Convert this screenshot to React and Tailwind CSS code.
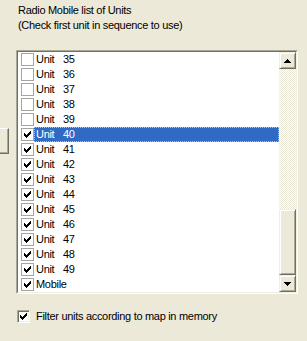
import React from 'react'

const units = [35, 36, 37, 38, 39, 40, 41, 42, 43, 44, 45, 46, 47, 48, 49]

// classic 7x7 check mark, drawn pixel by pixel
const checkPixels = [
  [6, 0], [5, 1], [6, 1], [0, 2], [4, 2], [5, 2], [6, 2],
  [0, 3], [1, 3], [3, 3], [4, 3], [5, 3],
  [0, 4], [1, 4], [2, 4], [3, 4], [4, 4], [1, 5], [2, 5], [3, 5], [2, 6],
]

const CheckMark = () => (
  <svg width="7" height="7" viewBox="0 0 7 7" shapeRendering="crispEdges">
    {checkPixels.map(([x, y]) => (
      <rect key={`${x}-${y}`} x={x} y={y} width="1" height="1" fill="#000" />
    ))}
  </svg>
)

const Arrow = ({ down }) => (
  <svg width="7" height="4" viewBox="0 0 7 4" shapeRendering="crispEdges">
    {down ? (
      <path d="M0 0h7v1H0zM1 1h5v1H1zM2 2h3v1H2zM3 3h1v1H3z" fill="#000" />
    ) : (
      <path d="M3 0h1v1H3zM2 1h3v1H2zM1 2h5v1H1zM0 3h7v1H0z" fill="#000" />
    )}
  </svg>
)

const ListCheck = ({ checked }) => (
  <div className="flex h-[13px] w-[13px] shrink-0 items-center justify-center border border-[#a5a59c] bg-white">
    {checked && <CheckMark />}
  </div>
)

const Row = ({ label, num, checked, selected }) => (
  <div className="flex h-[15px] items-center pl-[3px]">
    <ListCheck checked={checked} />
    <div
      className={`flex h-full flex-1 items-center pl-[2px] ${
        selected
          ? 'bg-[#316ac5] text-white outline-1 outline-dotted outline-[#f0c060] -outline-offset-1'
          : ''
      }`}
    >
      <span className="w-[27px]">{label}</span>
      {num && <span>{num}</span>}
    </div>
  </div>
)

const ScrollButton = ({ down }) => (
  <div className="flex h-[17px] w-[17px] shrink-0 items-center justify-center border border-t-[#f1efe2] border-l-[#f1efe2] border-r-[#716f64] border-b-[#716f64] bg-[#ece9d8] shadow-[inset_1px_1px_0_#fff,inset_-1px_-1px_0_#aca899]">
    <Arrow down={down} />
  </div>
)

export default function App() {
  return (
    <div className="relative h-[341px] w-[307px] overflow-hidden bg-[#ece9d8] font-['Liberation_Sans',Arial,sans-serif] text-[11px] leading-[15px] tracking-[-0.3px] text-black">
      {/* clipped neighbour button on the left */}
      <div className="absolute left-[-20px] top-[128px] h-[26px] w-[29px] border border-t-white border-l-white border-r-[#716f64] border-b-[#716f64] shadow-[inset_-1px_-1px_0_#aca899]" />

      <div className="pl-[18px] pt-[3px]">
        <p>Radio Mobile list of Units</p>
        <p>(Check first unit in sequence to use)</p>
      </div>

      <div className="ml-[16px] mt-[17px] flex h-[244px] w-[282px] border border-t-[#aca899] border-l-[#aca899] border-r-white border-b-white">
        <div className="flex flex-1 border border-t-[#716f64] border-l-[#716f64] border-r-[#f1efe2] border-b-[#f1efe2] bg-white">
          <div className="flex flex-1 flex-col">
            {units.map((u) => (
              <Row key={u} label="Unit" num={u} checked={u >= 40} selected={u === 40} />
            ))}
            <Row label="Mobile" checked />
          </div>
          <div className="flex w-[17px] flex-col">
            <ScrollButton />
            <div className="flex flex-1 flex-col justify-end bg-[repeating-conic-gradient(#fff_0_25%,#ece9d8_0_50%)] bg-[length:2px_2px]">
              <div className="h-[66px] w-[17px] border border-t-[#f1efe2] border-l-[#f1efe2] border-r-[#716f64] border-b-[#716f64] bg-[#ece9d8] shadow-[inset_1px_1px_0_#fff,inset_-1px_-1px_0_#aca899]" />
            </div>
            <ScrollButton down />
          </div>
        </div>
      </div>

      <div className="mt-[15px] flex items-center pl-[17px]">
        <div className="flex h-[13px] w-[13px] items-center justify-center border border-t-[#aca899] border-l-[#aca899] border-r-white border-b-white bg-white shadow-[inset_1px_1px_0_#716f64,inset_-1px_-1px_0_#f1efe2]">
          <CheckMark />
        </div>
        <span className="ml-[6px]">Filter units according to map in memory</span>
      </div>
    </div>
  )
}
